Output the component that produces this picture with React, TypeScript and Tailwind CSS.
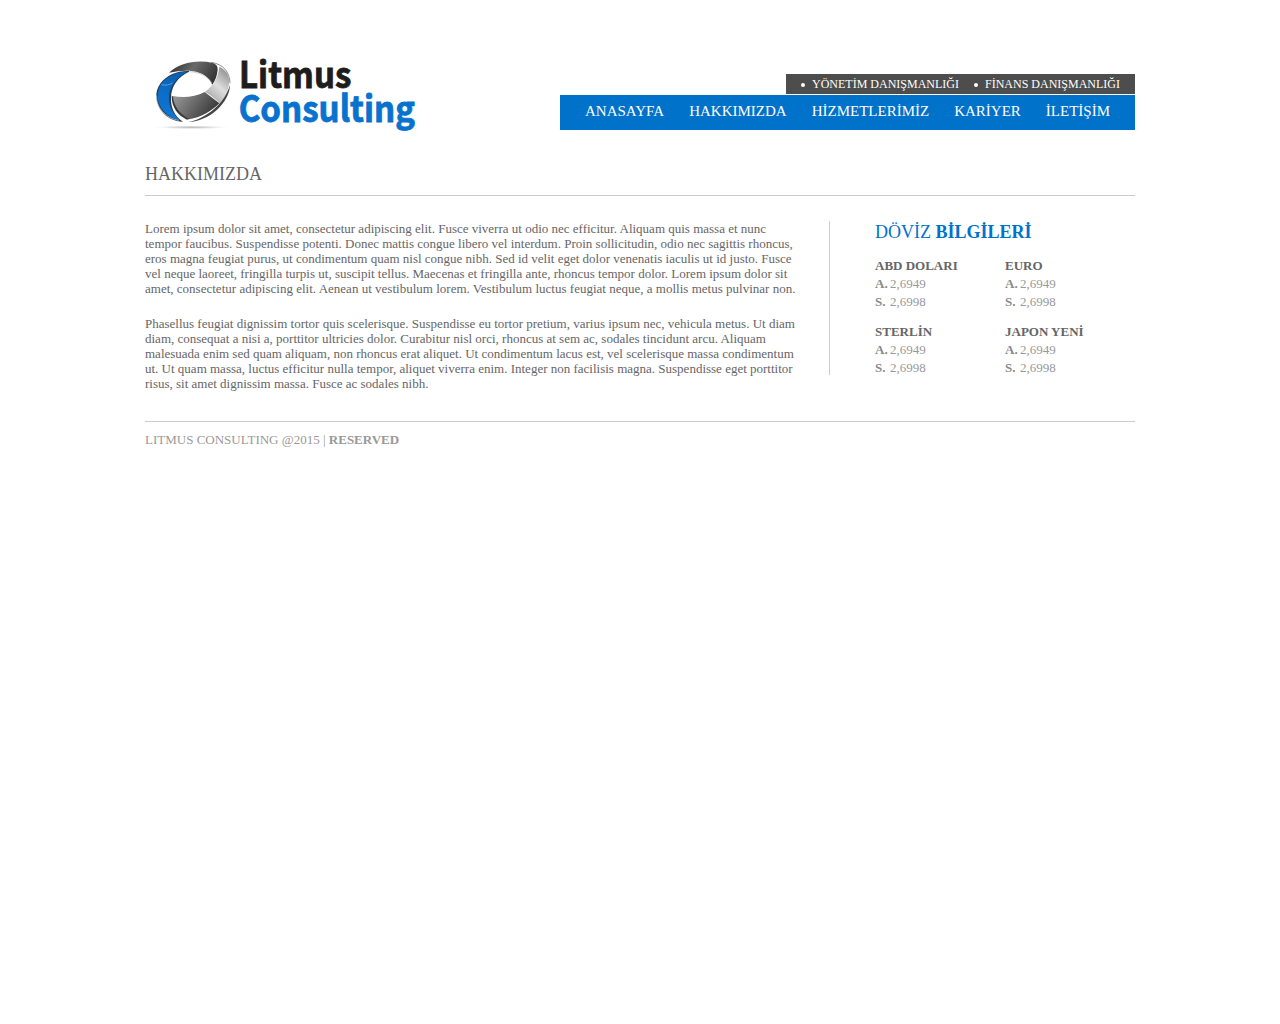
const services = ["YÖNETİM DANIŞMANLIĞI", "FİNANS DANIŞMANLIĞI"];
const pages = ["ANASAYFA", "HAKKIMIZDA", "HİZMETLERİMİZ", "KARİYER", "İLETİŞİM"];
const currencies = ["ABD DOLARI", "EURO", "STERLİN", "JAPON YENİ"];

function Logo() {
  return (
    <svg width="300" height="90" viewBox="0 0 900 270" className="overflow-visible" aria-label="Litmus Consulting">
      <defs>
        <linearGradient id="top" x1="0" y1="0.3" x2="1" y2="0.6">
          <stop offset="0" stopColor="#333" />
          <stop offset="0.45" stopColor="#6a6a6a" />
          <stop offset="1" stopColor="#333" />
        </linearGradient>
        <linearGradient id="right" x1="0.8" y1="0" x2="0.2" y2="1">
          <stop offset="0" stopColor="#8c8c8c" />
          <stop offset="0.5" stopColor="#dedede" />
          <stop offset="1" stopColor="#a0a0a0" />
        </linearGradient>
        <linearGradient id="bottom" x1="0" y1="0.2" x2="1" y2="0.6">
          <stop offset="0" stopColor="#999" />
          <stop offset="0.5" stopColor="#666" />
          <stop offset="1" stopColor="#343434" />
        </linearGradient>
        <linearGradient id="blue" x1="0.5" y1="0" x2="0.3" y2="1">
          <stop offset="0" stopColor="#0a5fae" />
          <stop offset="0.4" stopColor="#0b6cc4" />
          <stop offset="1" stopColor="#0f78d4" />
        </linearGradient>
        <radialGradient id="shade">
          <stop offset="0" stopColor="#bbb" />
          <stop offset="0.5" stopColor="#e0e0e0" />
          <stop offset="1" stopColor="#fff" stopOpacity="0" />
        </radialGradient>
      </defs>
      <ellipse cx="140" cy="232" rx="120" ry="6" fill="url(#shade)" />
      <path d="M72 68C104 38 155 29 201 38C213 41 219 48 218 60C216 78 211 92 202 104C194 85 180 74 162 68C137 59 104 62 72 68Z" fill="url(#top)" />
      <path d="M199 37C234 43 254 64 255 100" fill="none" stroke="#555" strokeWidth="2" />
      <path d="M130 65C162 65 190 80 200 99" fill="none" stroke="#bbb" strokeWidth="2" />
      <path d="M223 50C244 60 254 76 252 100C250 124 241 144 224 160C210 146 196 135 180 125C205 107 220 82 223 50Z" fill="url(#right)" />
      <path d="M83 138C115 144 151 141 179 126L223 160C201 182 170 202 132 208C105 196 86 173 83 138Z" fill="url(#bottom)" />
      <path d="M80 139L84 139C87 172 106 194 133 207L126 209C98 196 80 172 80 139Z" fill="#383838" />
      <path d="M255 104C254 160 190 214 131 216C184 205 240 160 255 104Z" fill="#444" />
      <path d="M132 63C101 61 66 74 47 99C27 126 31 160 51 185C67 204 88 214 114 215C88 198 77 172 78 143C79 107 98 82 132 65Z" fill="#263f57" />
      <path d="M128 65C98 64 66 78 49 101C32 128 36 160 56 183C70 199 87 208 105 210C82 191 71 168 72 141C73 108 95 82 128 65Z" fill="url(#blue)" />
      <path d="M35 137C32 170 62 206 102 211" fill="none" stroke="#d7e3ed" strokeWidth="2" />
      <path d="M49 104C62 107 73 105 83 99" fill="none" stroke="#81b8e8" strokeWidth="2" />
      <text x="282" y="113" textLength="337" lengthAdjust="spacingAndGlyphs" fill="#1d1d1b" stroke="#1d1d1b" strokeWidth="2.5" className="font-['Noto_Sans_CJK_SC',sans-serif] text-[108px] font-bold">Litmus</text>
      <text x="281" y="217" textLength="529" lengthAdjust="spacingAndGlyphs" fill="#0872ce" stroke="#0872ce" strokeWidth="2.5" className="font-['Noto_Sans_CJK_SC',sans-serif] text-[108px] font-bold">Consulting</text>
    </svg>
  );
}

function Rate({ name }: { name: string }) {
  return (
    <div className="w-[130px] text-[13px] leading-[18px] text-[#999]">
      <h3 className="font-bold text-[#666]">{name}</h3>
      <div className="flex"><b className="w-[15px] text-[#888]">A.</b>2,6949</div>
      <div className="flex"><b className="w-[15px] text-[#888]">S.</b>2,6998</div>
    </div>
  );
}

export default function App() {
  return (
    <div className="mx-auto w-[990px] pt-[50px] font-['Liberation_Serif',serif] text-[#666]">
      <header className="flex h-[90px] items-start justify-between">
        <Logo />
        <div className="flex flex-col items-end gap-px pt-6">
          <ul className="flex h-5 gap-[15px] bg-[#4d4d4d] px-[15px] text-[12px] leading-5 text-white">
            {services.map((item) => (
              <li key={item} className="flex items-center gap-[7px]">
                <span className="mt-[2px] size-1 rounded-full bg-white" />
                {item}
              </li>
            ))}
          </ul>
          <nav className="flex h-[35px] gap-[25px] bg-[#0072ca] px-[25px] text-[15px] leading-8 text-white">
            {pages.map((item) => <a key={item}>{item}</a>)}
          </nav>
        </div>
      </header>
      <h1 className="mt-[23px] h-[33px] border-b border-[#ccc] text-[18px] leading-[22px]">HAKKIMIZDA</h1>
      <main className="mt-[25px] flex h-[200px]">
        <div className="w-[684px] text-[13px] leading-[15px]">
          <p className="w-[655px]">
            Lorem ipsum dolor sit amet, consectetur adipiscing elit. Fusce viverra ut odio nec efficitur. Aliquam quis massa et nunc<br />
            tempor faucibus. Suspendisse potenti. Donec mattis congue libero vel interdum. Proin sollicitudin, odio nec sagittis rhoncus,<br />
            eros magna feugiat purus, ut condimentum quam nisl congue nibh. Sed id velit eget dolor venenatis iaculis ut id justo. Fusce<br />
            vel neque laoreet, fringilla turpis ut, suscipit tellus. Maecenas et fringilla ante, rhoncus tempor dolor. Lorem ipsum dolor sit<br />
            <span className="tracking-[0.01px]">amet, consectetur adipiscing elit. Aenean ut vestibulum lorem. Vestibulum luctus feugiat neque, a mollis metus pulvinar non.</span>
          </p>
          <p className="mt-5 w-[655px]">
            Phasellus feugiat dignissim tortor quis scelerisque. Suspendisse eu tortor pretium, varius ipsum nec, vehicula metus. Ut diam<br />
            diam, consequat a nisi a, porttitor ultricies dolor. Curabitur nisl orci, rhoncus at sem ac, sodales tincidunt arcu. Aliquam<br />
            malesuada enim sed quam aliquam, non rhoncus erat aliquet. Ut condimentum lacus est, vel scelerisque massa condimentum<br />
            ut. Ut quam massa, luctus efficitur nulla tempor, aliquet viverra enim. Integer non facilisis magna. Suspendisse eget porttitor<br />
            risus, sit amet dignissim massa. Fusce ac sodales nibh.
          </p>
        </div>
        <aside className="h-[154px] flex-1 border-l border-[#ccc] pl-[45px]">
          <h2 className="text-[18px] leading-[22px] text-[#0072ca]">DÖVİZ <b>BİLGİLERİ</b></h2>
          <div className="mt-[14px] grid w-[260px] grid-cols-2 gap-y-3">
            {currencies.map((name) => <Rate key={name} name={name} />)}
          </div>
        </aside>
      </main>
      <footer className="border-t border-[#ccc] pt-[10px] text-[13px] leading-[15px] text-[#999]">
        LITMUS CONSULTING @2015 | <b>RESERVED</b>
      </footer>
    </div>
  );
}
